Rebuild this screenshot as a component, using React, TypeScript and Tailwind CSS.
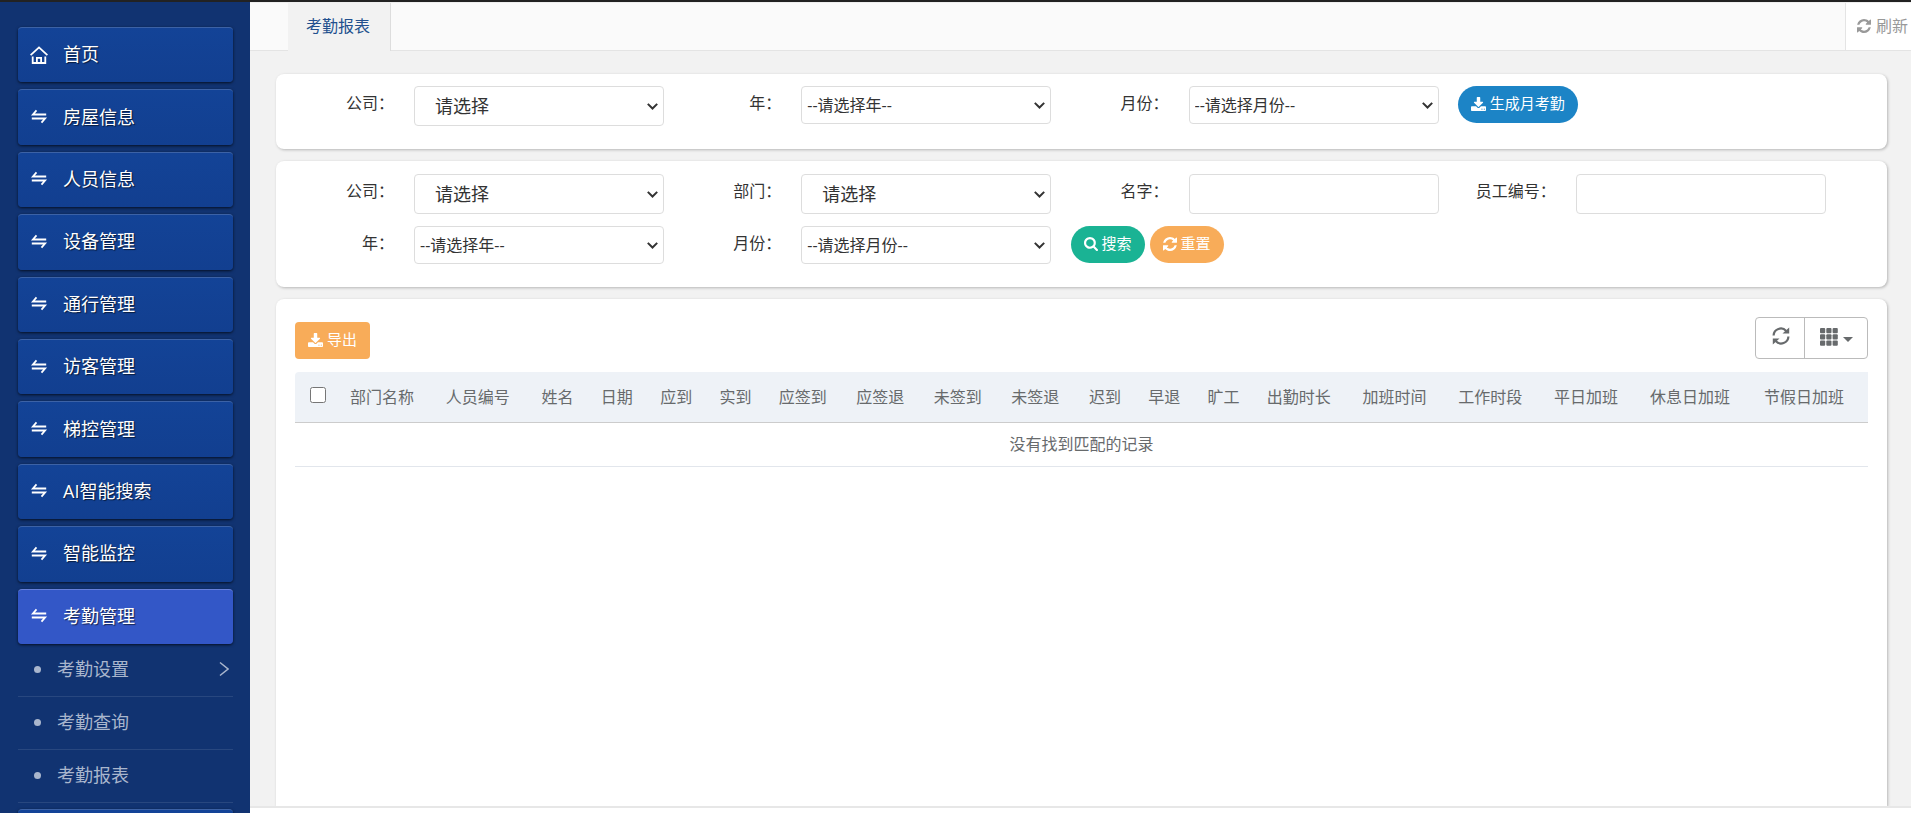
import type { ReactNode } from "react";

const menu = ["首页", "房屋信息", "人员信息", "设备管理", "通行管理", "访客管理", "梯控管理", "AI智能搜索", "智能监控", "考勤管理"];
const submenu = ["考勤设置", "考勤查询", "考勤报表"];
const columns = [
  "部门名称", "人员编号", "姓名", "日期", "应到", "实到", "应签到", "应签退", "未签到", "未签退",
  "迟到", "早退", "旷工", "出勤时长", "加班时间", "工作时段", "平日加班", "休息日加班", "节假日加班",
];

function HomeIcon() {
  return (
    <svg className="size-[18px]" viewBox="0 0 18 18" fill="none" stroke="currentColor" strokeWidth="1.8">
      <path d="M0.6 9.200 9 1.400l8.400 7.800M2.700 10.400V17h12.600v-6.600M6.900 17v-5.200h4.200V17" />
    </svg>
  );
}

function SwapIcon() {
  return (
    <svg className="size-[18px]" viewBox="0 0 18 18" fill="none" stroke="currentColor" strokeWidth="1.8">
      <path d="M16.200 6.500H2.900L6.500 2.300M1.800 10.500h13.300L11.500 14.700" />
    </svg>
  );
}

function RefreshIcon({ className }: { className: string }) {
  return (
    <svg className={className} viewBox="0 0 1536 1536" fill="currentColor">
      <path d="M1511 928q0 5-1 7-64 268-268 434.500t-478 166.500q-146 0-282.500-55t-243.500-157l-129 129q-19 19-45 19t-45-19-19-45v-448q0-26 19-45t45-19h448q26 0 45 19t19 45-19 45l-137 137q71 66 161 102t187 36q134 0 250-65t186-179q11-17 53-117 8-23 30-23h192q13 0 22.500 9.500t9.500 22.500zm25-800v448q0 26-19 45t-45 19h-448q-26 0-45-19t-19-45 19-45l138-138q-148-137-349-137-134 0-250 65t-186 179q-11 17-53 117-8 23-30 23h-199q-13 0-22.500-9.500t-9.500-22.500v-7q65-268 270-434.500t480-166.500q146 0 284 55.500t245 156.500l130-129q19-19 45-19t45 19 19 45z" />
    </svg>
  );
}

function SearchIcon() {
  return (
    <svg className="size-[14px]" viewBox="0 0 1664 1664" fill="currentColor">
      <path d="M1152 704q0-185-131.500-316.500t-316.500-131.500-316.500 131.500-131.500 316.500 131.500 316.500 316.500 131.500 316.500-131.500 131.500-316.500zm512 832q0 52-38 90t-90 38q-54 0-90-38l-343-342q-179 124-399 124-143 0-273.500-55.500t-225-150-150-225-55.500-273.500 55.500-273.500 150-225 225-150 273.500-55.500 273.500 55.500 225 150 150 225 55.500 273.500q0 220-124 399l343 343q37 37 37 90z" />
    </svg>
  );
}

function DownloadIcon() {
  return (
    <svg className="h-[14px] w-[15px]" viewBox="0 0 1664 1536" fill="currentColor">
      <path d="M1280 1344q0-26-19-45t-45-19-45 19-19 45 19 45 45 19 45-19 19-45zm256 0q0-26-19-45t-45-19-45 19-19 45 19 45 45 19 45-19 19-45zm128-224v320q0 40-28 68t-68 28h-1472q-40 0-68-28t-28-68v-320q0-40 28-68t68-28h465l135 136q58 56 136 56t136-56l136-136h464q40 0 68 28t28 68zm-325-569q17 41-14 70l-448 448q-18 19-45 19t-45-19l-448-448q-31-29-14-70 17-39 59-39h256v-448q0-26 19-45t45-19h256q26 0 45 19t19 45v448h256q42 0 59 39z" />
    </svg>
  );
}

function ReloadIcon() {
  return (
    <svg className="size-[18px]" viewBox="0 0 18 18">
      <path d="M1.600 8.500A7.200 7.200 0 0 1 14.200 4M16.400 9.500A7.200 7.200 0 0 1 3.800 14" fill="none" stroke="currentColor" strokeWidth="2.200" />
      <path d="M17.200 0.400V6.600h-6.700ZM0.800 17.600V11.400h6.700Z" fill="currentColor" />
    </svg>
  );
}

function GridIcon() {
  return (
    <svg className="size-[18px]" viewBox="0 0 18 18" fill="currentColor">
      {[0, 6.3, 12.6].map((y) => [0, 6.3, 12.6].map((x) => <rect key={`${x}-${y}`} x={x} y={y} width="5.200" height="5.200" rx="1" />))}
    </svg>
  );
}

function Card({ children, className }: { children: ReactNode; className: string }) {
  return <section className={`bg-white shadow-[1px_1px_3px_rgba(0,0,0,0.25)] ${className}`}>{children}</section>;
}

function Field({ id, label, children }: { id: string; label: string; children: ReactNode }) {
  return (
    <div className="flex w-1/4 items-start">
      <label htmlFor={id} className="mr-5 w-[98px] text-right leading-[35px]">{label}</label>
      {children}
    </div>
  );
}

function Select({ id, text, large = false }: { id: string; text: string; large?: boolean }) {
  return (
    <div className="relative w-[250px]">
      <select
        id={id}
        className={`block w-full appearance-none rounded border border-[#ddd] bg-white text-[#333] ${
          large ? "h-10 pl-5 text-[18px]" : "h-[38px] pl-[5px] text-base"
        }`}
      >
        <option>{text}</option>
      </select>
      <svg className="pointer-events-none absolute inset-y-0 right-1.5 my-auto h-[7px] w-[11px]" viewBox="0 0 11 7" fill="none" stroke="currentColor" strokeWidth="2">
        <path d="M0.800 0.900 5.500 5.500l4.700-4.600" />
      </svg>
    </div>
  );
}

function TextField({ id }: { id: string }) {
  return <input id={id} type="text" className="h-10 w-[250px] rounded border border-[#ddd] bg-white px-3" />;
}

export default function App() {
  return (
    <div className="flex h-screen flex-col overflow-hidden border-t-2 border-[#222] font-['Open_Sans','Noto_Sans_CJK_SC',sans-serif] text-base text-[#333]">
      <div className="flex min-h-0 flex-1">
        <nav className="w-[250px] shrink-0 overflow-hidden bg-[#113371] pt-[25px] pr-[17px] pl-[18px] text-[18px]">
          <ul className="grid h-[617px] grid-rows-10 gap-[7px]">
            {menu.map((name, i) => (
              <li key={name}>
                <a
                  href="#"
                  className={`flex h-full items-center gap-[15px] rounded border-t bg-linear-to-b pb-px pl-3 text-white shadow-[0_1px_3px_rgba(0,0,0,0.7)] [text-shadow:1px_1px_1px_rgba(0,0,0,0.6)] ${
                    i === 9 ? "border-[#6680da] from-[#3357c7] to-[#3357c7]" : "border-[#3c62a6] from-[#134397] to-[#123f90]"
                  }`}
                >
                  {i === 0 ? <HomeIcon /> : <SwapIcon />}
                  {name}
                </a>
              </li>
            ))}
          </ul>
          <ul>
            {submenu.map((name, i) => (
              <li key={name} className="border-b border-[#28477f]">
                <a href="#" className="flex h-[52px] items-center pb-0.5 pl-4 text-[#a9b6cd]">
                  <span className="mr-4 size-[7px] rounded-full bg-[#a9b6cd]" />
                  {name}
                  {i === 0 && (
                    <svg className="mr-1 ml-auto h-4 w-[10px]" viewBox="0 0 10 16" fill="none" stroke="currentColor" strokeWidth="1.500">
                      <path d="M1 1.500 9 8 1 14.500" />
                    </svg>
                  )}
                </a>
              </li>
            ))}
          </ul>
          <a href="#" className="mt-1.5 flex h-[55px] items-center rounded border-t border-[#3c62a6] bg-[#134397] pl-3 text-white shadow-[0_1px_3px_rgba(0,0,0,0.7)]">
            <SwapIcon />
          </a>
        </nav>

        <div className="flex min-w-0 flex-1 flex-col bg-[#f2f2f2]">
          <header className="flex h-[49px] shrink-0 border-t border-[#eee]">
            <div className="w-[38px] border-b border-[#e4e4e4] bg-[#fafafa]" />
            <a href="#" className="border-r border-[#ddd] pr-[20px] pl-[18px] leading-[46px] text-[#23508e]">考勤报表</a>
            <div className="flex-1 border-b border-[#e4e4e4] bg-[#fafafa]" />
            <button className="flex w-[66px] items-center gap-[5px] border-b border-l border-[#e4e4e4] bg-white pb-0.5 pl-[11px] whitespace-nowrap text-[#999]">
              <RefreshIcon className="size-[14px] shrink-0" />
              刷新
            </button>
          </header>

          <main className="flex min-h-0 flex-1 flex-col gap-3 overflow-hidden pt-[23px] pr-6 pl-[26px]">
            <Card className="flex h-[75px] items-start rounded-lg pt-3 pr-[42px] pl-5">
              <Field id="gen-company" label="公司："><Select id="gen-company" text="请选择" large /></Field>
              <Field id="gen-year" label="年："><Select id="gen-year" text="--请选择年--" /></Field>
              <Field id="gen-month" label="月份："><Select id="gen-month" text="--请选择月份--" /></Field>
              <button className="flex h-[37px] items-center gap-1 rounded-full bg-[#1c84c6] px-[13px] pb-0.5 text-[15px] text-white">
                <DownloadIcon />
                生成月考勤
              </button>
            </Card>

            <Card className="flex h-[126px] flex-wrap content-start items-start gap-y-3 rounded-lg pt-[13px] pr-[42px] pl-5">
              <Field id="company" label="公司："><Select id="company" text="请选择" large /></Field>
              <Field id="dept" label="部门："><Select id="dept" text="请选择" large /></Field>
              <Field id="name" label="名字："><TextField id="name" /></Field>
              <Field id="number" label="员工编号："><TextField id="number" /></Field>
              <Field id="year" label="年："><Select id="year" text="--请选择年--" /></Field>
              <Field id="month" label="月份："><Select id="month" text="--请选择月份--" /></Field>
              <div className="flex gap-[5px] text-[15px] text-white">
                <button className="flex h-[37px] items-center gap-1 rounded-full bg-[#1ab394] px-[13px] pb-0.5">
                  <SearchIcon />
                  搜索
                </button>
                <button className="flex h-[37px] items-center gap-1 rounded-full bg-[#f8ac59] px-[13px] pb-0.5">
                  <RefreshIcon className="size-[14px]" />
                  重置
                </button>
              </div>
            </Card>

            <Card className="flex-1 rounded-t-lg px-[19px] pt-[18px] text-[#676a6c]">
              <div className="mb-[13px] flex items-end justify-between">
                <button className="flex h-[37px] items-center gap-1 rounded bg-[#f8ac59] px-[13px] pb-0.5 text-[15px] text-white">
                  <DownloadIcon />
                  导出
                </button>
                <div className="flex h-[42px] rounded border border-[#bbb]">
                  <button aria-label="刷新" className="flex w-[49px] items-center border-r border-[#bbb] pb-1 pl-4"><ReloadIcon /></button>
                  <button aria-label="列" className="flex w-[62px] items-center gap-[5px] pb-0.5 pl-[15px]">
                    <GridIcon />
                    <svg className="mt-1 h-[5px] w-[10px]" viewBox="0 0 10 5" fill="currentColor"><path d="M0 0h10L5 5Z" /></svg>
                  </button>
                </div>
              </div>
              <table className="w-full text-left">
                <thead>
                  <tr className="h-[50px] border-b border-[#ccc] bg-[#eef2f7]">
                    <th className="w-[45px] rounded-tl pb-1">
                      <input type="checkbox" aria-label="全选" className="mx-auto block size-4" />
                    </th>
                    {columns.map((name) => (
                      <th key={name} className="px-[10px] font-normal whitespace-nowrap">{name}</th>
                    ))}
                  </tr>
                </thead>
                <tbody>
                  <tr className="h-11 border-b border-[#e2e6ec]">
                    <td colSpan={20} className="text-center">没有找到匹配的记录</td>
                  </tr>
                </tbody>
              </table>
            </Card>
          </main>
          <footer className="h-[7px] shrink-0 border-t-2 border-[#e7e7e7] bg-white" />
        </div>
      </div>
    </div>
  );
}
